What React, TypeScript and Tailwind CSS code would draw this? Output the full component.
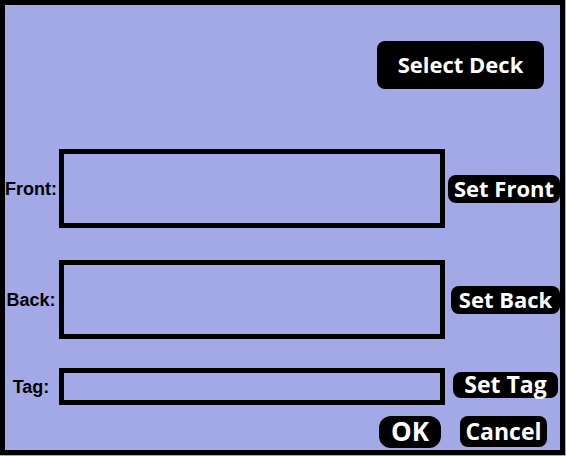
import { ReactNode } from "react";

const black =
  "flex cursor-pointer items-center justify-center whitespace-nowrap bg-black pb-0.5 font-['Open_Sans','Noto_Sans',sans-serif] font-bold leading-7 text-white";

function Row({ id, label, children }: { id: string; label: string; children: ReactNode }) {
  return (
    <div className="grid grid-cols-[54px_minmax(0,1fr)_115px] items-center">
      <label
        htmlFor={id}
        className="flex justify-center pr-0.5 whitespace-nowrap font-['Liberation_Sans',Arial,sans-serif] text-lg leading-5 font-bold text-black"
      >
        {label}
      </label>
      {children}
    </div>
  );
}

const field =
  "block w-full resize-none border-5 border-black bg-transparent px-2 font-['Liberation_Sans',Arial,sans-serif] text-lg text-black outline-none";

export default function App() {
  return (
    <div className="bg-[#a3a8e6] pr-px pb-px">
      <form
        className="border-5 border-black pb-0.5"
        onSubmit={(e) => e.preventDefault()}
      >
        <div className="flex justify-end pt-9 pr-4">
          <button type="button" className={`${black} h-12 w-[167px] rounded-lg text-[22px]`}>
            Select Deck
          </button>
        </div>
        <div className="mt-[60px] flex flex-col gap-8">
          <Row id="front" label="Front:">
            <textarea id="front" className={`${field} h-[79px]`} />
            <button type="button" className={`${black} ml-[3px] h-7 rounded-lg text-[22px]`}>
              Set Front
            </button>
          </Row>
          <Row id="back" label="Back:">
            <textarea id="back" className={`${field} h-[79px]`} />
            <button type="button" className={`${black} ml-[6px] h-7 rounded-lg text-[22px]`}>
              Set Back
            </button>
          </Row>
        </div>
        <div className="mt-[29px]">
          <Row id="tag" label="Tag:">
            <input id="tag" type="text" className={`${field} h-[37px]`} />
            <button
              type="button"
              className={`${black} mr-[2px] mb-1 ml-2 h-[26px] rounded-lg text-[23px]`}
            >
              Set Tag
            </button>
          </Row>
        </div>
        <div className="mt-[11px] flex justify-end gap-[19px] pr-[13px]">
          <button type="submit" className={`${black} h-8 w-[62px] rounded-xl text-[26px]`}>
            OK
          </button>
          <button type="button" className={`${black} h-[31px] w-[87px] rounded-lg text-[23px]`}>
            Cancel
          </button>
        </div>
      </form>
    </div>
  );
}
